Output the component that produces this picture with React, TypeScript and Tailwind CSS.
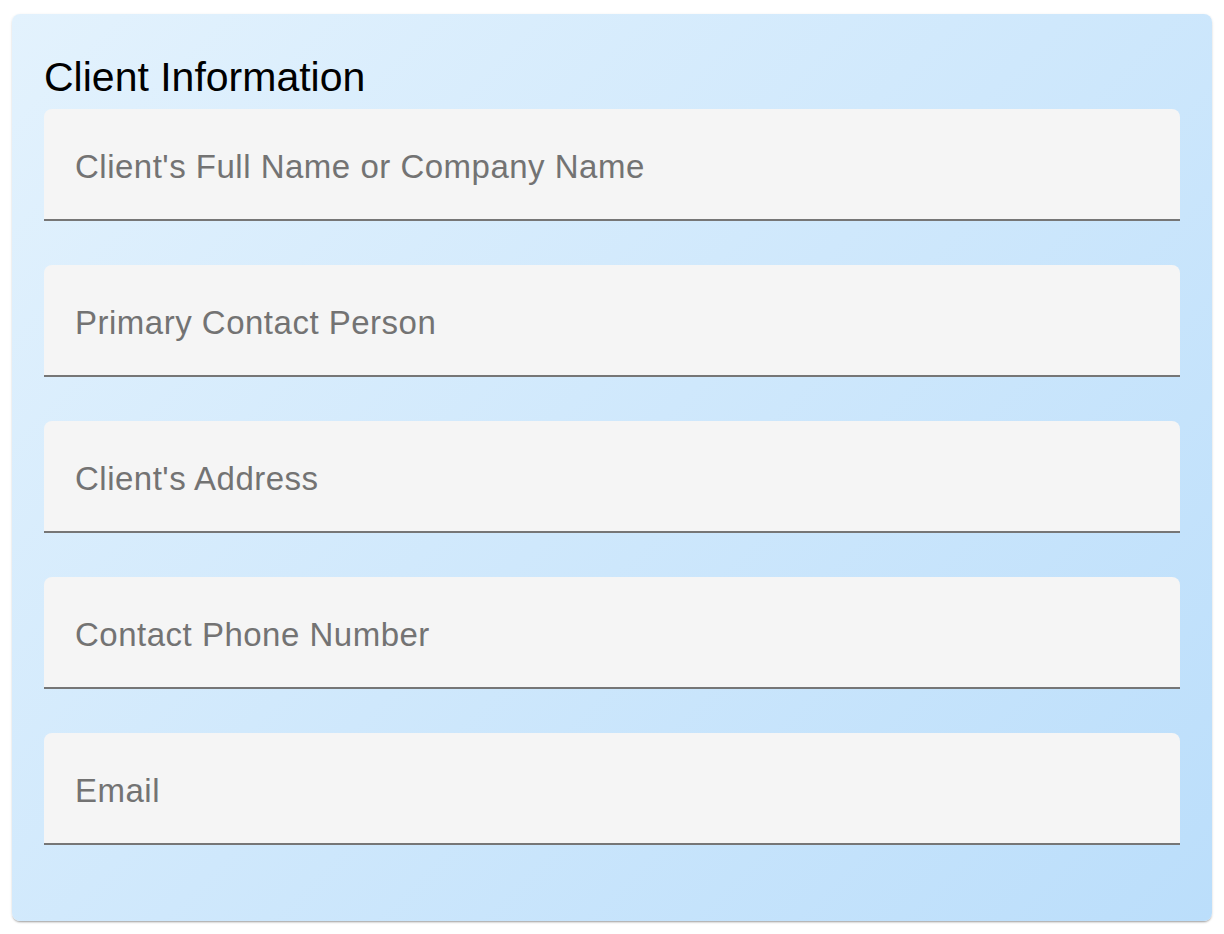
import React from "react";

const fields = [
  "Client's Full Name or Company Name",
  "Primary Contact Person",
  "Client's Address",
  "Contact Phone Number",
  "Email",
];

export default function App() {
  return (
    <div className="min-h-[934px] bg-white pt-[14px] px-[12px]" style={{ fontFamily: '"Liberation Sans", Arial, Helvetica, sans-serif' }}>
      <div className="w-[1200px] rounded-[8px] bg-[linear-gradient(135deg,#e3f2fd,#bbdefb)] shadow-[0_2px_2px_-1px_rgba(0,0,0,0.3),0_1px_3px_rgba(0,0,0,0.12)] px-[32px] pt-[39px] pb-[76px]">
        <h2 className="text-[41px] leading-[49px] text-black mb-[7px]">Client Information</h2>
        <div className="flex flex-col gap-[44px]">
          {fields.map((f) => (
            <div key={f} className="h-[112px] rounded-t-[8px] bg-[#f5f5f5] border-b-2 border-[#767676] flex items-center pl-[31px] pt-[6px]">
              <span className="text-[33px] tracking-[0.5px] text-[#737373]">{f}</span>
            </div>
          ))}
        </div>
      </div>
    </div>
  );
}
